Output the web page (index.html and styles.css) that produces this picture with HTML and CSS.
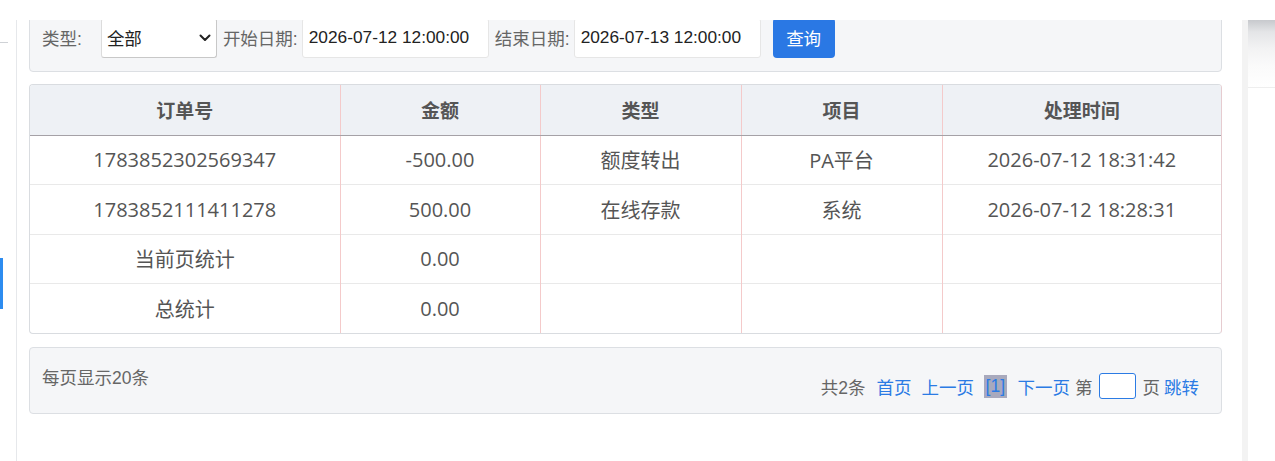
FILE: index.html
```html
<!DOCTYPE html>
<html lang="zh-CN">
<head>
<meta charset="utf-8">
<title>订单记录</title>
<link rel="stylesheet" href="styles.css">
</head>
<body>
<div class="app">
  <aside class="sidebar">
    <div class="side-rule"></div>
    <div class="side-active"></div>
  </aside>
  <main class="main">
    <form class="filter">
      <span class="lbl lbl-type">类型:</span>
      <div class="select-wrap">
        <span class="select-text">全部</span>
        <svg class="chev" width="12" height="8" viewBox="0 0 12 8"><path d="M1.5 1.5 L6 6 L10.5 1.5" fill="none" stroke="#222" stroke-width="2" stroke-linecap="round" stroke-linejoin="round"/></svg>
      </div>
      <span class="lbl">开始日期:</span>
      <div class="field">2026-07-12 12:00:00</div>
      <span class="lbl">结束日期:</span>
      <div class="field">2026-07-13 12:00:00</div>
      <button type="button" class="btn">查询</button>
    </form>

    <div class="table-box">
      <table class="grid">
        <colgroup>
          <col class="c1"><col class="c2"><col class="c3"><col class="c4"><col class="c5">
        </colgroup>
        <thead>
          <tr><th>订单号</th><th>金额</th><th>类型</th><th>项目</th><th>处理时间</th></tr>
        </thead>
        <tbody>
          <tr><td>1783852302569347</td><td>-500.00</td><td>额度转出</td><td>PA平台</td><td>2026-07-12 18:31:42</td></tr>
          <tr><td>1783852111411278</td><td>500.00</td><td>在线存款</td><td>系统</td><td>2026-07-12 18:28:31</td></tr>
          <tr><td>当前页统计</td><td>0.00</td><td></td><td></td><td></td></tr>
          <tr><td>总统计</td><td>0.00</td><td></td><td></td><td></td></tr>
        </tbody>
      </table>
    </div>

    <div class="pager">
      <span class="per-page">每页显示20条</span>
      <div class="pages">
        <span class="txt">共2条</span>
        <a class="lnk gap11">首页</a>
        <a class="lnk gap10">上一页</a>
        <span class="cur gap10">[1]</span>
        <a class="lnk gap11">下一页</a>
        <span class="txt gap5">第</span>
        <span class="jump gap6"></span>
        <span class="txt gap7">页</span>
        <a class="lnk gap4">跳转</a>
      </div>
    </div>
  </main>
  <aside class="rail">
    <div class="rail-strip"></div>
    <div class="rail-box">
      <div class="rail-head"></div>
    </div>
  </aside>
  <div class="topcover"></div>
</div>
</body>
</html>
```

FILE: styles.css
```css
* { box-sizing: border-box; }

html, body {
  margin: 0;
  padding: 0;
  background: #ffffff;
}

body {
  font-family: "Liberation Sans", "Noto Sans CJK SC", sans-serif;
  font-size: 17.5px;
  color: #555;
}

.app {
  position: relative;
  display: flex;
  height: 461px;
  overflow: hidden;
}

/* left sidebar edge */
.sidebar {
  width: 17px;
  flex: none;
  border-right: 1px solid #e6e8eb;
  display: flex;
  flex-direction: column;
}
.side-rule {
  margin-top: 42px;
  width: 8px;
  height: 1px;
  background: #cfd2d6;
}
.side-active {
  margin-top: 215px;
  width: 3px;
  height: 51px;
  background: #2d8cf0;
}

/* main column */
.main {
  flex: 1;
  min-width: 0;
  padding: 3px 20px 0 12px;
  display: flex;
  flex-direction: column;
}

/* filter bar */
.filter {
  margin: 0;
  display: flex;
  align-items: center;
  background: #f5f6f8;
  border: 1px solid #dcdfe3;
  border-radius: 4px;
  padding: 13px 12px;
  height: 69px;
}
.lbl {
  color: #666;
  font-size: 17.5px;
  margin-right: 4px;
  white-space: nowrap;
}
.lbl-type { margin-right: 19px; }

.select-wrap {
  width: 116px;
  height: 40px;
  background: #fff;
  border: 1px solid #dcdcdc;
  border-right-color: #c8c8c8;
  border-bottom-color: #c8c8c8;
  border-radius: 3px;
  display: flex;
  align-items: center;
  justify-content: space-between;
  padding: 0 5px 0 5px;
  margin-right: 6px;
  color: #222;
  font-size: 17.5px;
}
.chev { display: block; }

.field {
  width: 187px;
  height: 40px;
  background: #fff;
  border: 1px solid #e6e6e6;
  border-radius: 3px;
  display: flex;
  align-items: center;
  padding-left: 6px;
  color: #222;
  font-size: 17.3px;
  margin-right: 6px;
}

.btn {
  margin-left: 6px;
  width: 62px;
  height: 40px;
  border: none;
  border-radius: 4px;
  background: #2a78e4;
  color: #fff;
  font-family: "Liberation Sans", "Noto Sans CJK SC", sans-serif;
  font-size: 17.5px;
  padding: 0;
}

/* table */
.table-box {
  margin-top: 12px;
  border: 1px solid #d9dce0;
  border-right-color: #e6ccd0;
  border-radius: 4px;
  overflow: hidden;
}
.grid {
  width: 100%;
  border-collapse: collapse;
  table-layout: fixed;
  font-family: "Open Sans", "Noto Sans CJK SC", sans-serif;
  font-size: 20px;
}
.c1 { width: 310px; }
.c2 { width: 200px; }
.c3 { width: 201px; }
.c4 { width: 201px; }
.c5 { width: auto; }

.grid th {
  height: 50px;
  background: #eef1f5;
  color: #555;
  font-family: "Liberation Sans", "Noto Sans CJK SC", sans-serif;
  font-weight: bold;
  font-size: 19px;
  border-bottom: 1px solid #a5a1a6;
  border-left: 1px solid #f4caca;
  padding: 0;
  text-align: center;
}
.grid td {
  height: 49.5px;
  color: #555;
  border-top: 1px solid #e9e9e9;
  border-left: 1px solid #f4caca;
  padding: 0;
  text-align: center;
}
.grid thead th { border-top: none; }
.grid tbody tr:first-child td { border-top: none; }
.grid th:first-child,
.grid td:first-child { border-left: none; }

/* pager */
.pager {
  margin-top: 13px;
  height: 67px;
  background: #f5f6f8;
  border: 1px solid #dcdfe3;
  border-radius: 4px;
  padding: 18px 22px 0 12px;
  display: flex;
  justify-content: space-between;
  align-items: flex-start;
}
.per-page {
  line-height: 24px;
  color: #666;
  font-size: 17.5px;
}
.pages {
  margin-top: 7px;
  height: 26px;
  display: flex;
  align-items: center;
  font-size: 17.5px;
  white-space: nowrap;
}
.txt { color: #666; }
.lnk { color: #2b7be4; text-decoration: none; }
.cur {
  color: #2b7be4;
  background: #a8a9bd;
  padding: 2px 1.5px;
  line-height: 19px;
}
.jump {
  width: 37px;
  height: 26px;
  background: #fff;
  border: 1px solid #2b7be4;
  border-radius: 3px;
}
.gap4 { margin-left: 4px; }
.gap5 { margin-left: 5px; }
.gap6 { margin-left: 6px; }
.gap7 { margin-left: 7px; }
.gap10 { margin-left: 10px; }
.gap11 { margin-left: 11px; }

/* right rail */
.rail {
  width: 33px;
  flex: none;
  display: flex;
}
.rail-strip {
  width: 6px;
  background: #f3f3f3;
}
.rail-box {
  flex: 1;
  background: #fff;
}
.rail-head {
  margin-top: 20px;
  height: 68px;
  border-bottom: 1px solid #eeeeee;
  background: linear-gradient(to bottom, #c7c9cd 0px, #e4e5e7 12px, #f2f2f3 28px, #fafafa 45px, #ffffff 68px);
}

/* white band covering the top of the scrolled content */
.topcover {
  position: absolute;
  left: 0;
  top: 0;
  width: 100%;
  height: 20px;
  background: #fff;
}
```
